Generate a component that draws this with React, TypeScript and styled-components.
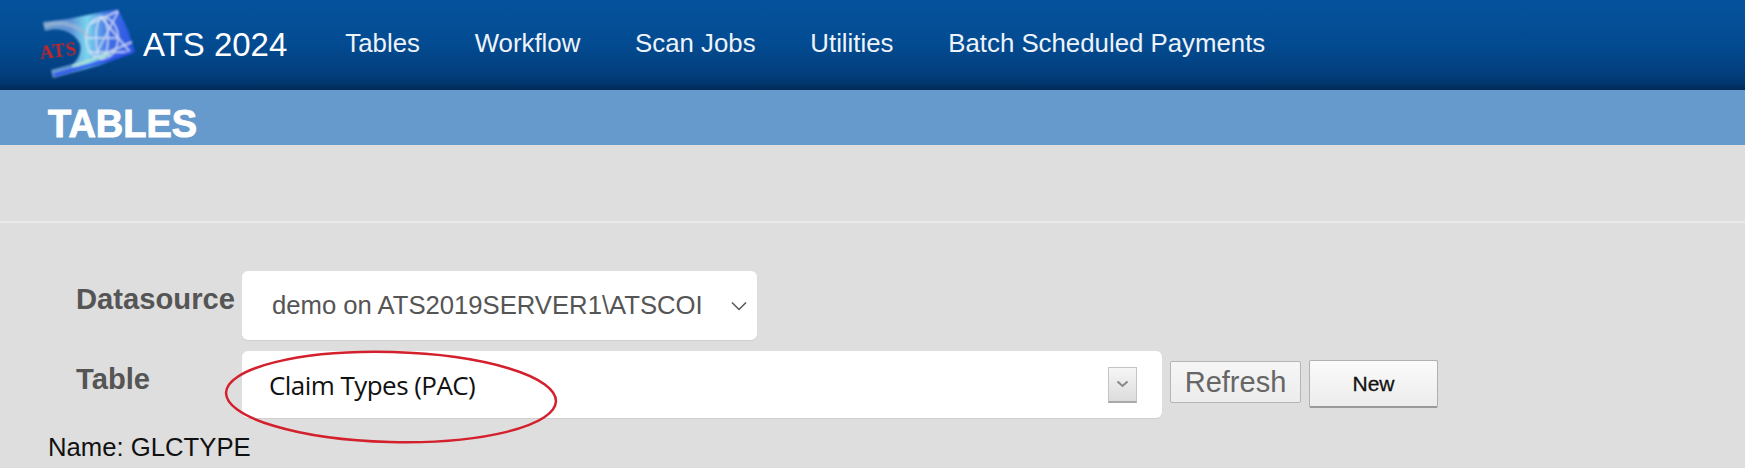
import React from "react";
import styled, { createGlobalStyle } from "styled-components";

const Global = createGlobalStyle`
  html, body { margin: 0; padding: 0; background: #dedede; overflow: hidden; }
  body { font-family: "Liberation Sans", Arial, sans-serif; }
  * { box-sizing: border-box; }
`;

const Page = styled.div`
  width: 1745px;
  height: 468px;
  overflow: hidden;
  background: #dedede;
`;

const Header = styled.header`
  height: 90px;
  display: flex;
  align-items: center;
  padding-left: 40px;
  background: linear-gradient(#05529c 0%, #034c93 45%, #033f7f 80%, #02376f 92%, #012a58 100%);
`;

const Brand = styled.div`
  display: flex;
  align-items: center;
  gap: 3px;
  margin-right: 58px;
`;

const BrandName = styled.span`
  color: #fff;
  font-size: 33px;
  line-height: 1;
  position: relative;
  top: -1px;
`;

const Nav = styled.nav`
  display: flex;
  gap: 54.8px;
`;

const NavItem = styled.a`
  color: #eef3f9;
  font-size: 25.8px;
  line-height: 1;
  position: relative;
  top: -1px;
`;

const Band = styled.div`
  height: 55px;
  background: #6699cc;
  padding: 19px 0 0 48px;
`;

const Title = styled.h1`
  margin: 0;
  color: #fff;
  font-size: 38px;
  line-height: 30px;
  font-weight: 700;
  -webkit-text-stroke: 1px #fff;
`;

const Toolbar = styled.div`
  height: 78px;
  border-bottom: 2px solid #e9e9e9;
`;

const Form = styled.div`
  padding: 48px 0 0 48px;
  display: flex;
  flex-direction: column;
`;

const Row = styled.div`
  display: flex;
  align-items: flex-start;
  position: relative;
`;

const Label = styled.label`
  width: 194px;
  padding-left: 28px;
  color: #555;
  font-size: 29.2px;
  font-weight: 700;
  line-height: 32px;
  padding-top: 12px;
`;

const DatasourceSelect = styled.div`
  width: 515px;
  height: 69px;
  background: #fff;
  border-radius: 6px;
  box-shadow: 0 1px 1px #cfcfcf;
  display: flex;
  align-items: center;
  justify-content: space-between;
  padding: 0 9px 0 30px;
  color: #555;
  font-size: 25.7px;
  letter-spacing: -0.02px;
`;

const TableSelect = styled.div`
  width: 920px;
  height: 67px;
  background: #fff;
  border-radius: 6px;
  box-shadow: 0 1px 1px #cfcfcf;
  display: flex;
  align-items: center;
  justify-content: space-between;
  padding: 0 25px 0 27px;
  color: #111;
  font-family: "Open Sans", sans-serif;
  font-size: 26px;
  letter-spacing: -0.55px;
`;

const ArrowBox = styled.span`
  width: 29px;
  height: 36px;
  background: linear-gradient(#f6f6f6, #dcdcdc);
  border: 1px solid #c4c4c4;
  border-bottom: 2px solid #a8a8a8;
  display: flex;
  align-items: center;
  justify-content: center;
`;

const RefreshButton = styled.button`
  width: 131px;
  height: 42px;
  margin: 10px 0 0 8px;
  padding: 0;
  background: linear-gradient(#f6f6f6, #ececec);
  border: 1px solid #b5b5b5;
  border-radius: 2px;
  color: #666;
  font-family: "Liberation Sans", sans-serif;
  font-size: 29px;
  line-height: 1;
`;

const NewButton = styled.button`
  width: 129px;
  height: 48px;
  margin: 9px 0 0 8px;
  padding: 0;
  background: linear-gradient(#fbfbfb, #ececec);
  border: 1px solid #b0b0b0;
  border-bottom: 2px solid #999;
  border-radius: 2px;
  color: #111;
  font-family: "Liberation Sans", sans-serif;
  font-size: 21px;
  line-height: 1;
  -webkit-text-stroke: 0.3px #111;
`;

const NameLine = styled.div`
  margin-top: 14px;
  color: #111;
  font-size: 25.7px;
  line-height: 30px;
`;

const Annotation = styled.svg`
  position: absolute;
  left: 175px;
  top: -4px;
  width: 340px;
  height: 104px;
  pointer-events: none;
`;

const Logo = () => (
  <svg width="100" height="75" viewBox="0 0 100 75" aria-hidden="true">
    <defs>
      <linearGradient id="lg" x1="0" y1="0.5" x2="1" y2="0.5">
        <stop offset="0" stopColor="#6f9ccb" />
        <stop offset="0.3" stopColor="#5f93d8" />
        <stop offset="0.48" stopColor="#7ad6ee" />
        <stop offset="0.72" stopColor="#3f6fe6" />
        <stop offset="1" stopColor="#2a55e2" />
      </linearGradient>
      <filter id="soft" x="-5%" y="-5%" width="110%" height="110%">
        <feGaussianBlur stdDeviation="1" />
      </filter>
      <filter id="softText" x="-5%" y="-5%" width="110%" height="110%">
        <feGaussianBlur stdDeviation="0.4" />
      </filter>
    </defs>
    <g filter="url(#soft)">
      <path d="M3 14 L5 23 C20 18 34 24 40 36 C42 44 38 52 33 56 L11 62 L13 70 L60 57 L95 44 L88 22 L78 1 L52 6 L28 11 Z" fill="url(#lg)" />
      <path d="M4 18 C20 12 38 16 50 30" fill="none" stroke="#9fb6d6" strokeWidth="4" opacity="0.7" />
      <g fill="none" stroke="#dbe6f6" strokeWidth="1.4" opacity="0.9">
        <ellipse cx="62" cy="30" rx="16" ry="21" />
        <ellipse cx="62" cy="30" rx="6" ry="21" />
        <path d="M46 30 H78 M50 16 L78 3 M48 44 L92 44 M60 8 L90 44 M78 4 L54 50 M36 58 L92 34" />
      </g>
      <path d="M14 67 L58 55 L92 44" fill="none" stroke="#2f55ee" strokeWidth="3" />
      <path d="M32 58 L70 46" fill="none" stroke="#a8e0d8" strokeWidth="2.5" />
    </g>
    <text x="0" y="49" fill="#c4252c" fontFamily="Liberation Serif, serif" fontWeight="700" fontSize="19" letterSpacing="0.5" transform="rotate(-7 18 44)" filter="url(#softText)">ATS</text>
  </svg>
);

export default function App() {
  return (
    <Page>
      <Global />
      <Header>
        <Brand>
          <Logo />
          <BrandName>ATS 2024</BrandName>
        </Brand>
        <Nav>
          <NavItem>Tables</NavItem>
          <NavItem>Workflow</NavItem>
          <NavItem>Scan Jobs</NavItem>
          <NavItem>Utilities</NavItem>
          <NavItem>Batch Scheduled Payments</NavItem>
        </Nav>
      </Header>
      <Band>
        <Title>TABLES</Title>
      </Band>
      <Toolbar />
      <Form>
        <Row>
          <Label>Datasource</Label>
          <DatasourceSelect>
            <span>demo on ATS2019SERVER1\ATSCOI</span>
            <svg width="18" height="10" viewBox="0 0 18 10" aria-hidden="true">
              <path d="M2 1.5 L9 8.5 L16 1.5" fill="none" stroke="#555" strokeWidth="1.5" />
            </svg>
          </DatasourceSelect>
        </Row>
        <Row style={{ marginTop: 11 }}>
          <Label>Table</Label>
          <TableSelect>
            <span>Claim Types (PAC)</span>
            <ArrowBox>
              <svg width="13" height="8" viewBox="0 0 13 8" aria-hidden="true">
                <path d="M1.5 1.5 L6.5 6 L11.5 1.5" fill="none" stroke="#888" strokeWidth="2" />
              </svg>
            </ArrowBox>
          </TableSelect>
          <RefreshButton>Refresh</RefreshButton>
          <NewButton>New</NewButton>
          <Annotation viewBox="0 0 340 104" aria-hidden="true">
            <ellipse cx="168" cy="50" rx="165" ry="45" fill="none" stroke="#d3202c" strokeWidth="2.5" transform="rotate(1.5 168 50)" />
          </Annotation>
        </Row>
        <NameLine>Name: GLCTYPE</NameLine>
      </Form>
    </Page>
  );
}
